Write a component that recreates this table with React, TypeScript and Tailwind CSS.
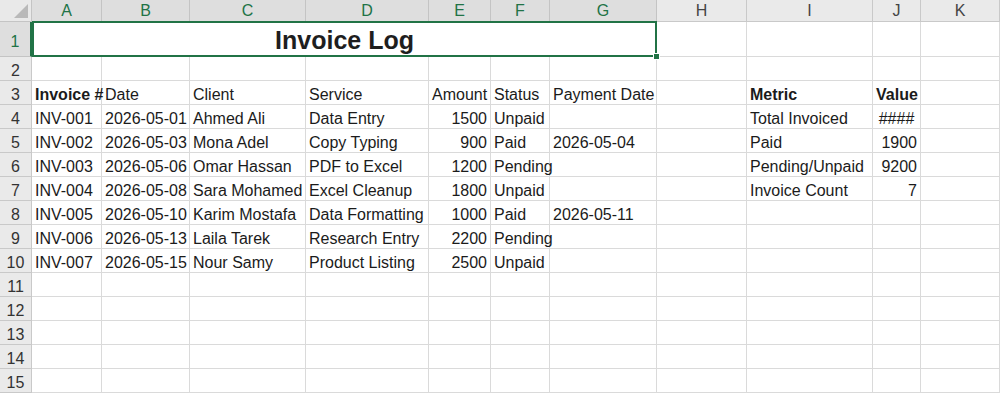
import React from "react";

type Cell = { t: string; b?: boolean; r?: boolean; c?: boolean };

const letters = ["A", "B", "C", "D", "E", "F", "G", "H", "I", "J", "K"];

const c = (t: string, opts: Partial<Cell> = {}): Cell => ({ t, ...opts });
const e = (): Cell => ({ t: "" });

const invoices = [
  ["INV-001", "2026-05-01", "Ahmed Ali", "Data Entry", "1500", "Unpaid", ""],
  ["INV-002", "2026-05-03", "Mona Adel", "Copy Typing", "900", "Paid", "2026-05-04"],
  ["INV-003", "2026-05-06", "Omar Hassan", "PDF to Excel", "1200", "Pending", ""],
  ["INV-004", "2026-05-08", "Sara Mohamed", "Excel Cleanup", "1800", "Unpaid", ""],
  ["INV-005", "2026-05-10", "Karim Mostafa", "Data Formatting", "1000", "Paid", "2026-05-11"],
  ["INV-006", "2026-05-13", "Laila Tarek", "Research Entry", "2200", "Pending", ""],
  ["INV-007", "2026-05-15", "Nour Samy", "Product Listing", "2500", "Unpaid", ""],
];

const metrics: Cell[][] = [
  [c("Total Invoiced"), c("####", { c: true })],
  [c("Paid"), c("1900", { r: true })],
  [c("Pending/Unpaid"), c("9200", { r: true })],
  [c("Invoice Count"), c("7", { r: true })],
];

function buildRows(): Cell[][] {
  const rows: Cell[][] = [];
  // row 2 — empty
  rows.push(letters.map(() => e()));
  // row 3 — headers
  rows.push([
    c("Invoice #", { b: true }),
    c("Date"),
    c("Client"),
    c("Service"),
    c("Amount"),
    c("Status"),
    c("Payment Date"),
    e(),
    c("Metric", { b: true }),
    c("Value", { b: true }),
    e(),
  ]);
  invoices.forEach((inv, i) => {
    const m = metrics[i] ?? [e(), e()];
    rows.push([
      c(inv[0]),
      c(inv[1]),
      c(inv[2]),
      c(inv[3]),
      c(inv[4], { r: true }),
      c(inv[5]),
      c(inv[6]),
      e(),
      m[0],
      m[1],
      e(),
    ]);
  });
  // rows 11..15 — empty
  for (let i = 0; i < 5; i++) rows.push(letters.map(() => e()));
  return rows;
}

export default function App() {
  const rows = buildRows();

  return (
    <div className="w-[1000px] h-[394px] overflow-hidden bg-white font-['Liberation_Sans',Arial,sans-serif] text-[16px] text-[#1b1b1b]">
      <div className="grid grid-cols-[32px_70px_88px_116px_123px_62px_59px_107px_90px_126px_48px_79px] grid-rows-[22px_35px_repeat(14,24px)]">
        {/* Corner */}
        <div className="relative bg-[#e9e9e9] border-r border-b border-[#c4c4c4]">
          <svg className="absolute right-[3px] bottom-[3px]" width="14" height="14" viewBox="0 0 14 14">
            <polygon points="14,0 14,14 0,14" fill="#b9b9b9" />
          </svg>
        </div>

        {/* Column headers */}
        {letters.map((l, i) => {
          const sel = i < 7;
          return (
            <div
              key={l}
              className={`flex items-center justify-center border-r border-b leading-none ${
                sel
                  ? "bg-[#dedede] text-[#217346] border-r-[#c4c4c4] border-b-[#217346]"
                  : "bg-[#eaeaea] text-[#444] border-[#c9c9c9]"
              }`}
            >
              {l}
            </div>
          );
        })}

        {/* Row 1 */}
        <div className="flex items-center justify-center bg-[#dedede] text-[#217346] border-r-2 border-r-[#217346] border-b border-b-[#c4c4c4] pt-[6px]">
          1
        </div>
        <div className="relative col-span-7 flex items-end justify-center pb-0 border-2 border-[#217346] -mt-px">
          <span className="font-bold text-[25px] leading-[30px] text-[#1e1e1e]">Invoice Log</span>
          <div className="absolute -right-[5px] -bottom-[5px] w-[7px] h-[7px] bg-[#217346] border border-white" />
        </div>
        {[7, 8, 9, 10].map((k) => (
          <div key={k} className="border-r border-b border-[#dadada]" />
        ))}

        {/* Rows 2..15 */}
        {rows.map((row, ri) => (
          <React.Fragment key={ri}>
            <div className="flex items-end justify-center leading-[18px] bg-[#eaeaea] text-[#333] border-r border-b border-[#c9c9c9]">
              {ri + 2}
            </div>
            {row.map((cell, ci) => (
              <div
                key={ci}
                className={`flex items-end leading-[18px] whitespace-nowrap border-r border-b border-[#dadada] ${
                  cell.r ? "justify-end pr-[3px]" : cell.c ? "justify-center" : "pl-[3px]"
                } ${cell.b ? "font-bold" : ""}`}
              >
                {cell.t}
              </div>
            ))}
          </React.Fragment>
        ))}
      </div>
    </div>
  );
}
